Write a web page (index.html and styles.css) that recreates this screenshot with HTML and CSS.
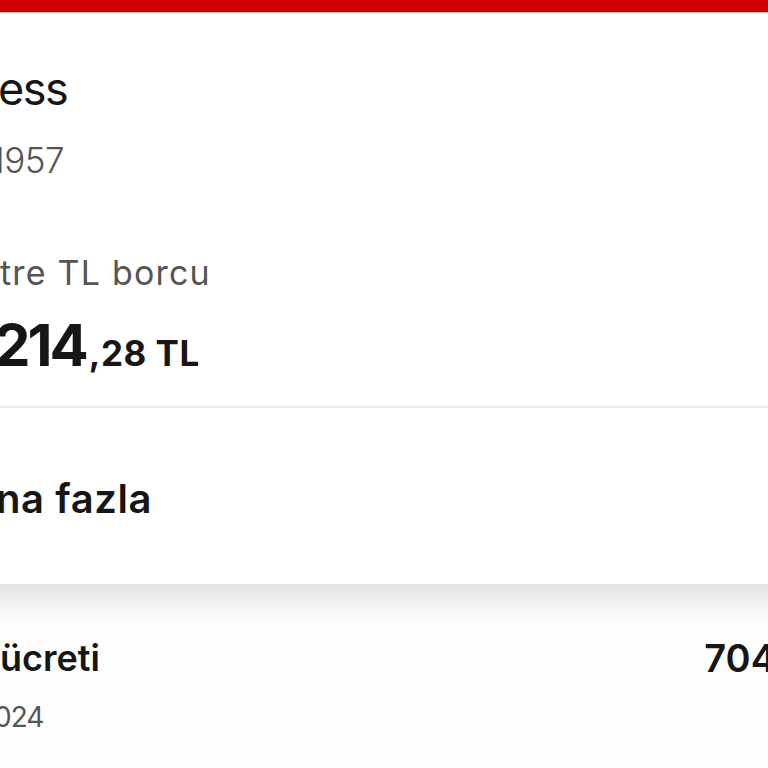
FILE: index.html
```html
<!DOCTYPE html>
<html lang="tr">
<head>
<meta charset="utf-8">
<link rel="stylesheet" href="styles.css">
</head>
<body>
<div class="screen">
  <div class="topbar"></div>
  <section class="card">
    <div class="card-head">
      <div class="name">ess</div>
      <div class="number">1957</div>
      <div class="label">tre TL borcu</div>
      <div class="amount"><span class="amount-int">214</span><span class="amount-dec">,28 TL</span></div>
    </div>
    <div class="card-row">
      <div class="more">na fazla</div>
    </div>
  </section>
  <div class="shadow"></div>
  <section class="tx">
    <div class="tx-left">
      <div class="tx-title">ücreti</div>
      <div class="tx-date">024</div>
    </div>
    <div class="tx-amount">704</div>
  </section>
</div>
</body>
</html>
```
FILE: styles.css
```css
* { box-sizing: border-box; margin: 0; padding: 0; }
html, body { width: 768px; height: 768px; overflow: hidden; background: #fdfdfd; }
body { font-family: Inter, "Noto Sans", sans-serif; color: #161616; }
.screen { display: flex; flex-direction: column; width: 768px; }
.topbar { height: 13px; background: #d00000; border-bottom: 1px solid #eab0b0; }
.card { background: #ffffff; display: flex; flex-direction: column; }
.card-head { padding-top: 52px; border-bottom: 2px solid #ececec; padding-bottom: 14px; }
.name { font-size: 45px; font-weight: 400; line-height: 48px; letter-spacing: -1.5px; margin-left: -2px; }
.number { font-size: 35px; font-weight: 300; color: #555; line-height: 40px; margin-top: 27px; margin-left: -9px; letter-spacing: -0.5px; }
.label { font-size: 34px; font-weight: 400; color: #555; line-height: 40px; margin-top: 73px; letter-spacing: 1.2px; }
.amount { margin-top: 20px; line-height: 64px; margin-left: -6px; }
.amount-int { font-size: 58px; font-weight: 700; letter-spacing: -3px; }
.amount-dec { font-size: 35px; font-weight: 700; margin-left: 3px; letter-spacing: 0.5px; }
.card-row { height: 176px; display: flex; align-items: center; padding-top: 4px; }
.more { font-size: 40px; font-weight: 600; margin-left: -4px; letter-spacing: 0.6px; }
.shadow { height: 40px; background: linear-gradient(#e2e2e2, #f4f4f4 55%, #fdfdfd); }
.tx { display: flex; justify-content: space-between; padding-top: 12px; }
.tx-title { font-size: 36px; font-weight: 600; line-height: 44px; }
.tx-date { font-size: 28px; font-weight: 400; color: #555; line-height: 40px; margin-top: 17px; margin-left: -6px; letter-spacing: -1px; }
.tx-amount { font-size: 38px; font-weight: 600; line-height: 44px; margin-right: -8px; }
```
